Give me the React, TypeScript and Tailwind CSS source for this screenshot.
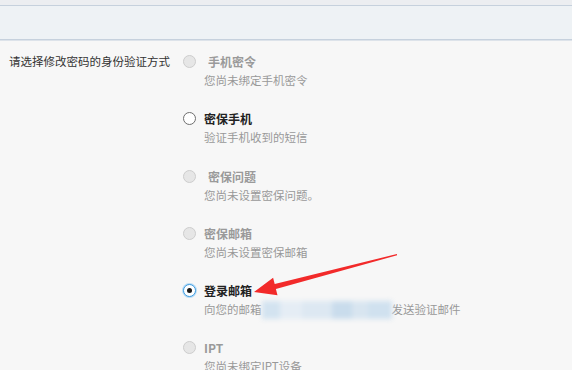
import React from 'react';

type Option = {
  title: string;
  desc: React.ReactNode;
  state: 'disabled' | 'enabled' | 'checked';
  indent?: boolean;
};

function Radio({ state }: { state: Option['state'] }) {
  if (state === 'checked') {
    return (
      <span className="flex h-[13px] w-[13px] items-center justify-center rounded-full border border-[#3d9be0] bg-white shadow-[0_0_0_1px_#b9dcf5]">
        <span className="h-[5px] w-[5px] rounded-full bg-[#1a1a1a]" />
      </span>
    );
  }
  if (state === 'enabled') {
    return <span className="block h-[13px] w-[13px] rounded-full border border-[#6e6e6e] bg-white" />;
  }
  return <span className="block h-[13px] w-[13px] rounded-full border border-[#cdcdcd] bg-[#e6e6e6]" />;
}

function BlurredEmail() {
  return (
    <span className="relative inline-block h-[19px] w-[130px] align-top">
      <span className="absolute inset-x-0 top-[1px] flex h-[18px] blur-[2.5px]">
        <span className="w-[18px] bg-[#d3e3f0]" />
        <span className="w-[22px] bg-[#e5edf5]" />
        <span className="w-[30px] bg-[#dde8f2]" />
        <span className="w-[20px] bg-[#c9dcec]" />
        <span className="w-[16px] bg-[#d8e5f0]" />
        <span className="w-[24px] bg-[#d0e1ef]" />
      </span>
    </span>
  );
}

const options: Option[] = [
  { title: '手机密令', desc: '您尚未绑定手机密令', state: 'disabled', indent: true },
  { title: '密保手机', desc: '验证手机收到的短信', state: 'enabled' },
  { title: '密保问题', desc: '您尚未设置密保问题。', state: 'disabled', indent: true },
  { title: '密保邮箱', desc: '您尚未设置密保邮箱', state: 'disabled' },
  {
    title: '登录邮箱',
    desc: (
      <>
        向您的邮箱
        <BlurredEmail />
        发送验证邮件
      </>
    ),
    state: 'checked',
  },
  { title: 'IPT', desc: '您尚未绑定IPT设备', state: 'disabled' },
];

export default function App() {
  return (
    <div
      className="relative h-[370px] w-[572px] overflow-hidden bg-[#f7f7f7] text-[11.5px]"
      style={{ fontFamily: '"Noto Sans CJK SC", "Noto Sans", sans-serif' }}
    >
      {/* header band */}
      <div className="h-[5px] bg-[#eceef1]" />
      <div className="h-[35px] border-y border-[#c6d1dd] bg-[#eef2f5]" />
      <div className="h-[1px] bg-[#dde3ea]" />

      <div className="flex pt-[11px]">
        <div className="w-[183px] pl-[9px] leading-[19px] text-[#333]">请选择修改密码的身份验证方式</div>

        <div className="flex flex-col">
          {options.map((o) => (
            <div key={o.title} className="flex h-[57.3px]">
              <div className="flex h-[19px] w-[21px] items-center">
                <Radio state={o.state} />
              </div>
              <div className="leading-[19px]">
                <div
                  className={`text-[12px] font-bold ${o.indent ? 'pl-[4px]' : ''} ${
                    o.state === 'disabled' ? 'text-[#9a9a9a]' : 'text-[#222]'
                  }`}
                >
                  {o.title}
                </div>
                <div className="whitespace-nowrap text-[#999]">{o.desc}</div>
              </div>
            </div>
          ))}
        </div>
      </div>

      {/* red annotation arrow */}
      <svg className="pointer-events-none absolute left-0 top-0" width="572" height="370">
        <polygon
          points="254,292 273.1,277.8 274.7,284.1 396.9,254 397.1,255.2 275.9,288.9 277.5,295.2"
          fill="#f22a2a"
        />
      </svg>
    </div>
  );
}
